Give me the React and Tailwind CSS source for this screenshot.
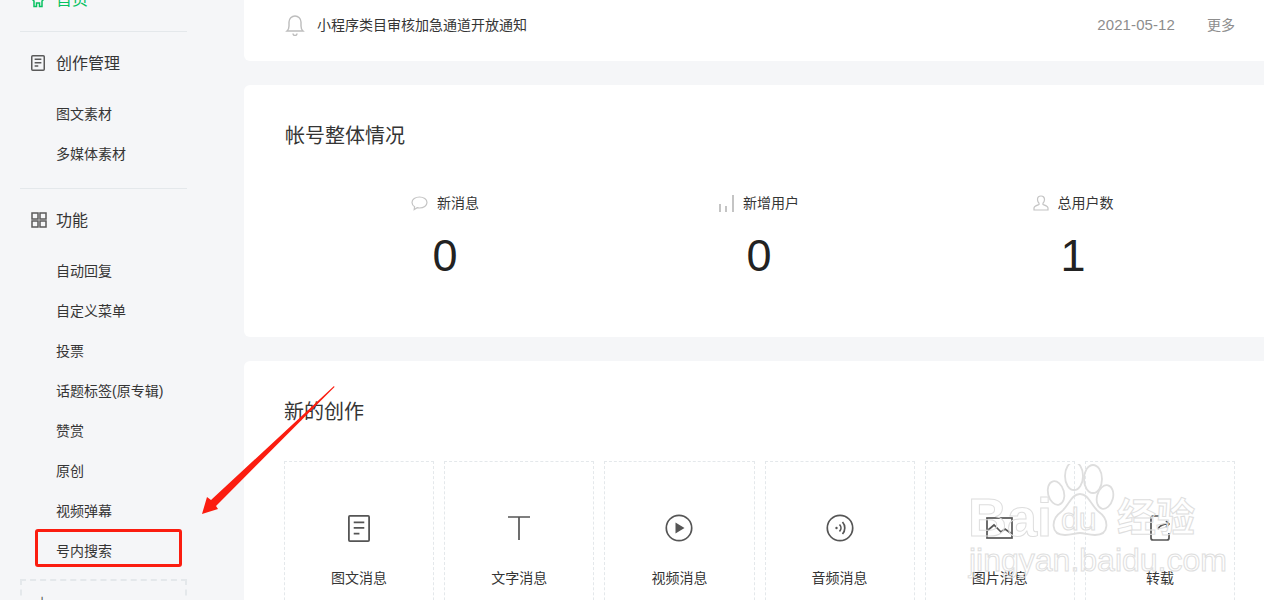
import React from "react";

const font = { fontFamily: '"Liberation Sans","Noto Sans CJK SC",sans-serif' };

function DocIcon({ w = 14, h = 16, sw = 1.5, c = "#5a5a5a" }) {
  return (
    <svg width={w} height={h} viewBox={`0 0 ${w} ${h}`} fill="none" stroke={c} strokeWidth={sw}>
      <rect x={sw / 2} y={sw / 2} width={w - sw} height={h - sw} rx="1" />
      <path d={`M${w * 0.26} ${h * 0.27}H${w * 0.74}M${w * 0.26} ${h * 0.48}H${w * 0.74}M${w * 0.26} ${h * 0.69}H${w * 0.52}`} />
    </svg>
  );
}

function GridIcon() {
  return (
    <svg width="16" height="16" viewBox="0 0 16 16" fill="none" stroke="#5a5a5a" strokeWidth="1.500">
      <rect x="1" y="1" width="6" height="6" />
      <rect x="9" y="1" width="6" height="6" />
      <rect x="1" y="9" width="6" height="6" />
      <rect x="9" y="9" width="6" height="6" />
    </svg>
  );
}

function SideItem({ children }) {
  return <div className="h-[40px] pl-[36px] flex items-center text-[14px] text-[#353535]">{children}</div>;
}

function SideHead({ icon, children, className = "" }) {
  return (
    <div className={`h-[40px] flex items-center text-[16px] text-[#353535] ${className}`}>
      <span className="w-[36px] pl-[11px] flex items-center">{icon}</span>
      <span className="pt-[2px]">{children}</span>
    </div>
  );
}

function Stat({ icon, label, value }) {
  return (
    <div className="flex flex-col items-center">
      <div className="h-[24px] flex items-center gap-[9px] text-[14px] text-[#353535]">
        {icon}
        <span>{label}</span>
      </div>
      <div className="mt-[15px] h-[52px] leading-[52px] text-[45px] text-[#222]">{value}</div>
    </div>
  );
}

function Tile({ icon, label }) {
  return (
    <div className="flex-1 h-[200px] border border-dashed border-[#e4e8eb] flex flex-col items-center">
      <div className="mt-[46px] h-[40px] flex items-center justify-center">{icon}</div>
      <div className="mt-[19px] h-[22px] leading-[22px] text-[14px] text-[#353535]">{label}</div>
    </div>
  );
}

const ic = { fill: "none", stroke: "#555", strokeWidth: 1.7 };
const wm = "text-transparent [-webkit-text-stroke:1px_#dedede]";

export default function App() {
  return (
    <div style={font} className="relative h-[600px] w-[1264px] overflow-hidden flex bg-[#f5f6f8]">
      <aside className="w-[244px] shrink-0 pl-[20px] pr-[57px] -mt-[20px]">
        <div className="h-[40px] flex items-center text-[16px] text-[#07c160]">
          <span className="w-[36px] pl-[10px] flex items-center">
            <svg width="16" height="16" viewBox="0 0 16 16" fill="none" stroke="#07c160" strokeWidth="1.500">
              <path d="M8 1 L15 6 L12 9 L12 14.500 L9.500 14.500 L9.500 11 L6.500 11 L6.500 14.500 L4 14.500 L4 9 L1 6 Z" />
            </svg>
          </span>
          首页
        </div>
        <div className="mt-[11px] border-t border-[#e4e8eb]" />
        <SideHead className="mt-[11px]" icon={<DocIcon />}>创作管理</SideHead>
        <div className="mt-[11px]">
          <SideItem>图文素材</SideItem>
          <SideItem>多媒体素材</SideItem>
        </div>
        <div className="mt-[14px] border-t border-[#e4e8eb]" />
        <SideHead className="mt-[11px]" icon={<GridIcon />}>功能</SideHead>
        <div className="mt-[11px]">
          {["自动回复", "自定义菜单", "投票", "话题标签(原专辑)", "赞赏", "原创", "视频弹幕", "号内搜索"].map((t) => (
            <SideItem key={t}>{t}</SideItem>
          ))}
        </div>
        <div className="mt-[8px] h-[80px] border-2 border-dashed border-[#e4e8eb] pl-[16px] pt-[12px] text-[14px] leading-none text-[#555]">+</div>
      </aside>

      <main className="flex-1 flex flex-col gap-[24px]">
        <section className="h-[61px] shrink-0 bg-white rounded-bl-[6px] pb-[11px] pl-[41px] pr-[29px] flex items-center text-[14px]">
          <svg width="20" height="22" viewBox="0 0 20 22" fill="none" stroke="#bdbdbd" strokeWidth="1.400">
            <path d="M2 17c1.600-1.400 2-3 2-5V8a6 6 0 0 1 12 0v4c0 2 .4 3.600 2 5Z" />
            <path d="M8 19.500a2 2 0 0 0 4 0" />
          </svg>
          <span className="ml-[12px] text-[#353535]">小程序类目审核加急通道开放通知</span>
          <span className="ml-auto text-[15px] text-[#8d8d8d] tracking-[0.1px]">2021-05-12</span>
          <span className="ml-[32px] text-[#8d8d8d]">更多</span>
        </section>

        <section className="h-[252px] shrink-0 bg-white rounded-l-[6px] pt-[36px] pl-[41px] pr-[34px]">
          <h2 className="h-[30px] leading-[30px] text-[20px] font-normal text-[#353535]">帐号整体情况</h2>
          <div className="mt-[40px] ml-[3px] grid grid-cols-3">
            <Stat
              label="新消息"
              value="0"
              icon={
                <svg width="17" height="15" viewBox="0 0 17 15" fill="none" stroke="#c4c4c4" strokeWidth="1.200">
                  <path d="M8.500 1C4.400 1 1 3.400 1 6.500c0 1.700 1 3.200 2.600 4.200L3.200 13.500l3-1.800c.7.200 1.500.3 2.300.3 4.100 0 7.500-2.400 7.500-5.500S12.600 1 8.500 1Z" />
                </svg>
              }
            />
            <Stat
              label="新增用户"
              value="0"
              icon={
                <svg width="15" height="17" viewBox="0 0 15 17" fill="#c4c4c4">
                  <rect x="0" y="9" width="2" height="8" />
                  <rect x="6" y="11" width="2" height="6" />
                  <rect x="13" y="0" width="2" height="17" />
                </svg>
              }
            />
            <Stat
              label="总用户数"
              value="1"
              icon={
                <svg width="16" height="16" viewBox="0 0 16 16" fill="none" stroke="#c4c4c4" strokeWidth="1.200">
                  <path d="M8 1c-2.200 0-3.500 1.600-3.500 3.600 0 1.400.6 2.700 1.500 3.500v1.400c-1.800.7-5 1.500-5 3.500v2h14v-2c0-2-3.200-2.800-5-3.500V8.100c.9-.8 1.500-2.100 1.500-3.500C11.500 2.600 10.200 1 8 1Z" />
                </svg>
              }
            />
          </div>
        </section>

        <section className="flex-1 bg-white rounded-l-[6px] pt-[36px] pl-[40px] pr-[29px]">
          <h2 className="h-[30px] leading-[30px] text-[20px] font-normal text-[#353535]">新的创作</h2>
          <div className="mt-[34px] flex gap-[10px]">
            <Tile label="图文消息" icon={<DocIcon w={22} h={27} sw={1.800} c="#555" />} />
            <Tile
              label="文字消息"
              icon={
                <svg width="22" height="24" viewBox="0 0 22 24" {...ic}>
                  <path d="M0 1h22M11 1v23" />
                </svg>
              }
            />
            <Tile
              label="视频消息"
              icon={
                <svg width="28" height="28" viewBox="0 0 28 28" {...ic}>
                  <circle cx="14" cy="14" r="12.700" />
                  <path d="M10.500 8.500 19.500 14l-9 5.500Z" fill="#555" stroke="none" />
                </svg>
              }
            />
            <Tile
              label="音频消息"
              icon={
                <svg width="28" height="28" viewBox="0 0 28 28" {...ic}>
                  <circle cx="14" cy="14" r="12.700" />
                  <circle cx="10.500" cy="14" r="1.200" fill="#555" stroke="none" />
                  <path d="M13.500 10.500a5 5 0 0 1 0 7M16.500 8a9 9 0 0 1 0 12" />
                </svg>
              }
            />
            <Tile
              label="图片消息"
              icon={
                <svg width="27" height="22" viewBox="0 0 27 22" {...ic}>
                  <rect x="1" y="1" width="25" height="20" />
                  <path d="M1 14 8 8l7 7 4-3 7 5" />
                </svg>
              }
            />
            <Tile
              label="转载"
              icon={
                <svg width="20" height="26" viewBox="0 0 20 26" {...ic}>
                  <path d="M9 1H3a2 2 0 0 0-2 2v20a2 2 0 0 0 2 2h14a2 2 0 0 0 2-2v-5" />
                  <path d="M8 14c2-4 5-5 10-5M16 6l3 3-3 3" />
                </svg>
              }
            />
          </div>
        </section>
      </main>

      {/* 红色标注 */}
      <div className="absolute left-[35px] top-[529px] w-[147px] h-[38px] border-[3px] border-[#fb1d10] rounded-[3px]" />
      <svg className="absolute left-0 top-0 pointer-events-none" width="1264" height="600">
        <polygon points="334,386 211,500 207,497 202,514 218,509 216,506 334.500,387" fill="#fb1d10" />
      </svg>

      {/* 水印 */}
      <div className="absolute left-[965px] top-[464px] w-[240px] h-[115px] pointer-events-none">
        <svg className="absolute left-[80px] top-0" width="72" height="76" viewBox="0 0 72 76" fill="none" stroke="#dedede" strokeWidth="1.800">
          <ellipse cx="11" cy="29" rx="8" ry="12" transform="rotate(-15 11 29)" />
          <ellipse cx="29" cy="12" rx="9" ry="14" />
          <ellipse cx="48" cy="15" rx="9" ry="14" />
          <ellipse cx="60" cy="33" rx="8" ry="12" transform="rotate(15 60 33)" />
          <path d="M35 30C26 30 24 42 16 48 6 55 5 71 20 71 27 71 30 69 35 69 40 69 43 71 50 71 65 71 64 55 54 48 46 42 44 30 35 30Z" />
        </svg>
        <div className={`absolute left-[3px] top-[28px] text-[54px] leading-[50px] font-bold ${wm}`}>Bai</div>
        <div className={`absolute left-[96px] top-[39px] text-[32px] leading-[32px] ${wm}`}>du</div>
        <div className={`absolute left-[152px] top-[32px] text-[39px] leading-[44px] font-bold ${wm}`}>经验</div>
        <div className={`absolute left-[4px] top-[78px] text-[32px] leading-[36px] ${wm}`}>jingyan.baidu.com</div>
      </div>
    </div>
  );
}
